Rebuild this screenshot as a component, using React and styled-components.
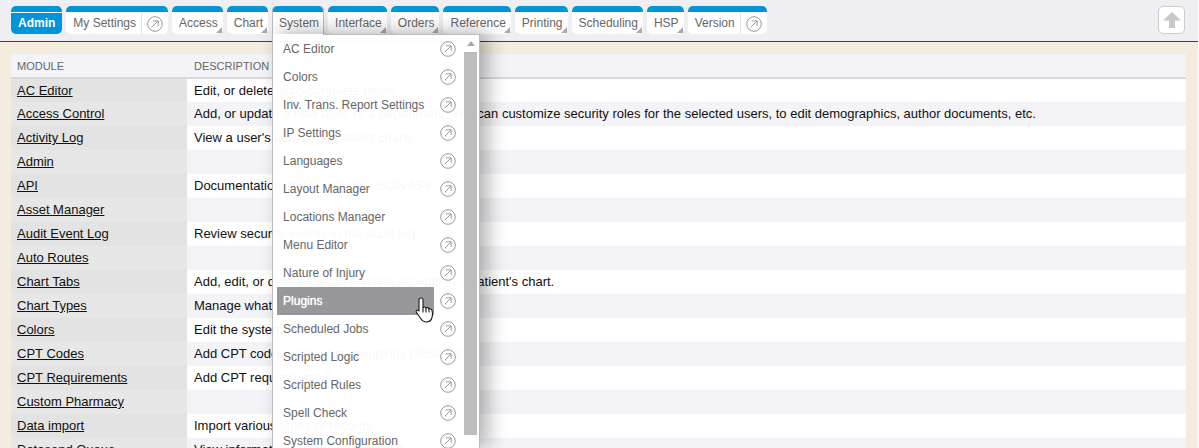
import React from 'react'
import styled, { createGlobalStyle } from 'styled-components'

const GlobalStyle = createGlobalStyle`
  html, body {
    margin: 0;
    padding: 0;
    height: 448px;
    overflow: hidden;
    background: #fff;
    font-family: "Liberation Sans", Arial, sans-serif;
  }
`

const tabs = [
  { name: 'Admin', active: true },
  { name: 'My Settings', link: true },
  { name: 'Access', more: true },
  { name: 'Chart', more: true },
  { name: 'System', open: true },
  { name: 'Interface', more: true },
  { name: 'Orders', more: true },
  { name: 'Reference', more: true },
  { name: 'Printing', more: true },
  { name: 'Scheduling', more: true },
  { name: 'HSP', more: true },
  { name: 'Version', link: true },
]

const menuItems = [
  'AC Editor', 'Colors', 'Inv. Trans. Report Settings', 'IP Settings', 'Languages',
  'Layout Manager', 'Locations Manager', 'Menu Editor', 'Nature of Injury', 'Plugins',
  'Scheduled Jobs', 'Scripted Logic', 'Scripted Rules', 'Spell Check', 'System Configuration',
]

const rows = [
  ['AC Editor', 'Edit, or delete auto-complete fields.'],
  ['Access Control', 'Add, or update a new user, or a department. You can customize security roles for the selected users, to edit demographics, author documents, etc.'],
  ['Activity Log', "View a user's activity on patient charts."],
  ['Admin', ''],
  ['API', 'Documentation and testing for JSON API'],
  ['Asset Manager', ''],
  ['Audit Event Log', 'Review security events in the audit log'],
  ['Auto Routes', ''],
  ['Chart Tabs', "Add, edit, or delete the tabs displayed whithin a patient's chart."],
  ['Chart Types', 'Manage what chart types are available'],
  ['Colors', 'Edit the system colors'],
  ['CPT Codes', 'Add CPT codes and setup groupings (Picklists)'],
  ['CPT Requirements', 'Add CPT requirements'],
  ['Custom Pharmacy', ''],
  ['Data import', 'Import various types of records'],
  ['Datasend Queue', 'View information sent over datasend'],
]

function LinkIcon() {
  return (
    <svg width="16" height="16" viewBox="0 0 16 16" fill="none" stroke="#999" strokeWidth="1">
      <circle cx="8" cy="8" r="7.3" />
      <path d="M4.8 11.2 L11 5 M6.2 4.8 H11.2 V9.8" />
    </svg>
  )
}

function HandCursor() {
  return (
    <svg width="19" height="26" viewBox="0 0 19 26" fill="#fff" stroke="#1a1a1a" strokeWidth="1.1" strokeLinejoin="round">
      <path d="M6 1 C7.2 1 8 1.8 8 3 V10.5 C9 9.6 10.6 9.8 11 11 C12 10.2 13.6 10.5 14 12 C15 11.4 16.8 12 17 13.6 C17.6 16 17.6 18.6 17 20.5 C16.4 23 15 25 11.5 25 C8 25 6.6 23.4 5 20.5 L1.4 15.4 C0.5 13.6 2.6 12.4 4 14 V3 C4 1.8 4.8 1 6 1 Z" />
      <path d="M8 10.5 V15.5 M11 11 V15.5 M14 12 V15.5" fill="none" />
    </svg>
  )
}

export default function App() {
  return (
    <Page>
      <GlobalStyle />
      <Header>
        <TabBar>
          {tabs.map((t) => (
            <Tab key={t.name} $active={t.active} $open={t.open} $more={t.more}>
              <TabLabel $active={t.active}>{t.name}</TabLabel>
              {t.link && (
                <TabLink>
                  <LinkIcon />
                </TabLink>
              )}
              {t.open && (
                <Menu>
                  <MenuList>
                    {menuItems.map((item) => (
                      <MenuRow key={item}>
                        <MenuLabel $hover={item === 'Plugins'}>
                          {item}
                          {item === 'Plugins' && (
                            <Cursor>
                              <HandCursor />
                            </Cursor>
                          )}
                        </MenuLabel>
                        <MenuIcon>
                          <LinkIcon />
                        </MenuIcon>
                      </MenuRow>
                    ))}
                  </MenuList>
                  <ScrollTrack>
                    <ScrollArrow />
                    <ScrollThumb />
                  </ScrollTrack>
                </Menu>
              )}
            </Tab>
          ))}
        </TabBar>
        <UpButton>
          <svg width="16" height="16" viewBox="0 0 16 16" fill="#c8c8c8">
            <path d="M8 0 L16 7.6 V8.6 H11 V16 H5 V8.6 H0 V7.6 Z" />
          </svg>
        </UpButton>
      </Header>
      <Content>
        <Table>
          <thead>
            <tr>
              <HeadCell>MODULE</HeadCell>
              <HeadCell>DESCRIPTION</HeadCell>
            </tr>
          </thead>
          <tbody>
            {rows.map(([name, text], i) => (
              <tr key={name}>
                <ModuleCell $alt={i % 2 === 1}>
                  <ModuleLink>{name}</ModuleLink>
                </ModuleCell>
                <DescCell $alt={i % 2 === 1}>{text}</DescCell>
              </tr>
            ))}
          </tbody>
        </Table>
      </Content>
    </Page>
  )
}

const Page = styled.div`
  width: 1198px;
  height: 448px;
  overflow: hidden;
  background: #f4ecdf;
`

const Header = styled.header`
  display: flex;
  justify-content: space-between;
  align-items: flex-start;
  box-sizing: border-box;
  height: 42px;
  padding: 6px 13px 0 11px;
  background: #eeeef3;
  border-bottom: 1px solid #444;
`

const TabBar = styled.nav`
  display: flex;
  gap: 4px;
`

const Tab = styled.div`
  position: relative;
  z-index: ${(p) => (p.$open ? 3 : 'auto')};
  display: flex;
  box-sizing: border-box;
  height: ${(p) => (p.$open ? '29px' : '28px')};
  padding-top: 6px;
  border-radius: ${(p) => (p.$open ? '5px 5px 0 0' : '5px')};
  background: linear-gradient(#0095d9 6px, ${(p) => (p.$active ? '#0095d9' : '#fff')} 6px);
  box-shadow: ${(p) => (p.$open ? 'inset 1px 0 #bbb, inset -1px 0 #bbb' : 'none')};

  ${(p) =>
    p.$open &&
    `&::before {
      content: '';
      position: absolute;
      z-index: 1;
      left: 1px;
      right: 1px;
      bottom: 0;
      height: 1px;
      background: #fff;
    }`}

  ${(p) =>
    p.$more &&
    `&::after {
      content: '';
      position: absolute;
      right: 1px;
      bottom: 1px;
      border-style: solid;
      border-width: 0 0 6px 6px;
      border-color: transparent transparent #aaa transparent;
    }`}
`

const TabLabel = styled.span`
  padding: ${(p) => (p.$active ? '0 7px' : '0 5px 0 7px')};
  font-size: 12px;
  line-height: 21px;
  color: ${(p) => (p.$active ? '#fff' : '#666')};
  font-weight: ${(p) => (p.$active ? 'bold' : 'normal')};
  border-top: ${(p) => (p.$active ? '1px solid #fff' : '1px solid transparent')};
`

const TabLink = styled.span`
  display: flex;
  align-items: center;
  justify-content: center;
  width: 26px;
  border-left: 1px solid #e4e4e4;

  svg {
    margin-top: 1px;
  }
`

const Menu = styled.div`
  position: absolute;
  top: 28px;
  left: 0;
  display: flex;
  box-sizing: border-box;
  width: 208px;
  height: 415px;
  overflow: hidden;
  background: rgba(255, 255, 255, 0.97);
  border: 1px solid #bbb;
  border-bottom: 0;
  box-shadow: 8px -2px 18px rgba(0, 0, 0, 0.3);
`

const MenuList = styled.div`
  flex: 1;
  padding-left: 4px;
`

const MenuRow = styled.div`
  display: flex;
  align-items: center;
  height: 28px;
`

const MenuLabel = styled.div`
  position: relative;
  box-sizing: border-box;
  width: 157px;
  height: 28px;
  padding: 0 6px;
  font-size: 12px;
  line-height: 29px;
  color: ${(p) => (p.$hover ? '#fff' : '#666')};
  background: ${(p) => (p.$hover ? '#98989c' : 'transparent')};
  text-shadow: ${(p) => (p.$hover ? '0 0 1px #fff' : 'none')};
`

const MenuIcon = styled.span`
  display: flex;
  margin-left: 6px;
`

const Cursor = styled.span`
  position: absolute;
  top: 10px;
  left: 138px;
  display: flex;
`

const ScrollTrack = styled.div`
  display: flex;
  flex-direction: column;
  align-items: center;
  flex: none;
  width: 15px;
  margin-right: 1px;
  background: #fff;
`

const ScrollArrow = styled.div`
  margin-top: 6px;
  border-style: solid;
  border-width: 0 4px 5px;
  border-color: transparent transparent #a8a8a8;
`

const ScrollThumb = styled.div`
  width: 13px;
  height: 383px;
  margin-top: 6px;
  background: #bdbdbd;
`

const UpButton = styled.button`
  display: flex;
  align-items: center;
  justify-content: center;
  width: 27px;
  height: 28px;
  padding: 0;
  background: #fff;
  border: 1px solid #ccc;
  border-radius: 5px;
`

const Content = styled.main`
  padding: 12px 12px 0 11px;
`

const Table = styled.table`
  width: 100%;
  border-collapse: collapse;
  table-layout: fixed;
  font-size: 13px;
`

const HeadCell = styled.th`
  height: 23px;
  padding: 0 7px;
  font-size: 11px;
  font-weight: normal;
  text-align: left;
  color: #666;
  background: #f4f4f8;
  border-bottom: 2px solid #d8d8d8;

  &:first-child {
    width: 163px;
    padding: 0 7px 0 6px;
  }
`

const ModuleCell = styled.td`
  height: 24px;
  padding: 0 7px 1px 6px;
  box-sizing: border-box;
  background: ${(p) => (p.$alt ? '#e7e7e7' : '#e3e3e3')};
`

const ModuleLink = styled.a`
  color: #111;
  text-decoration: underline;
`

const DescCell = styled.td`
  height: 24px;
  padding: 0 7px 1px;
  box-sizing: border-box;
  white-space: nowrap;
  color: #111;
  background: ${(p) => (p.$alt ? '#f4f4f8' : '#fff')};
`
